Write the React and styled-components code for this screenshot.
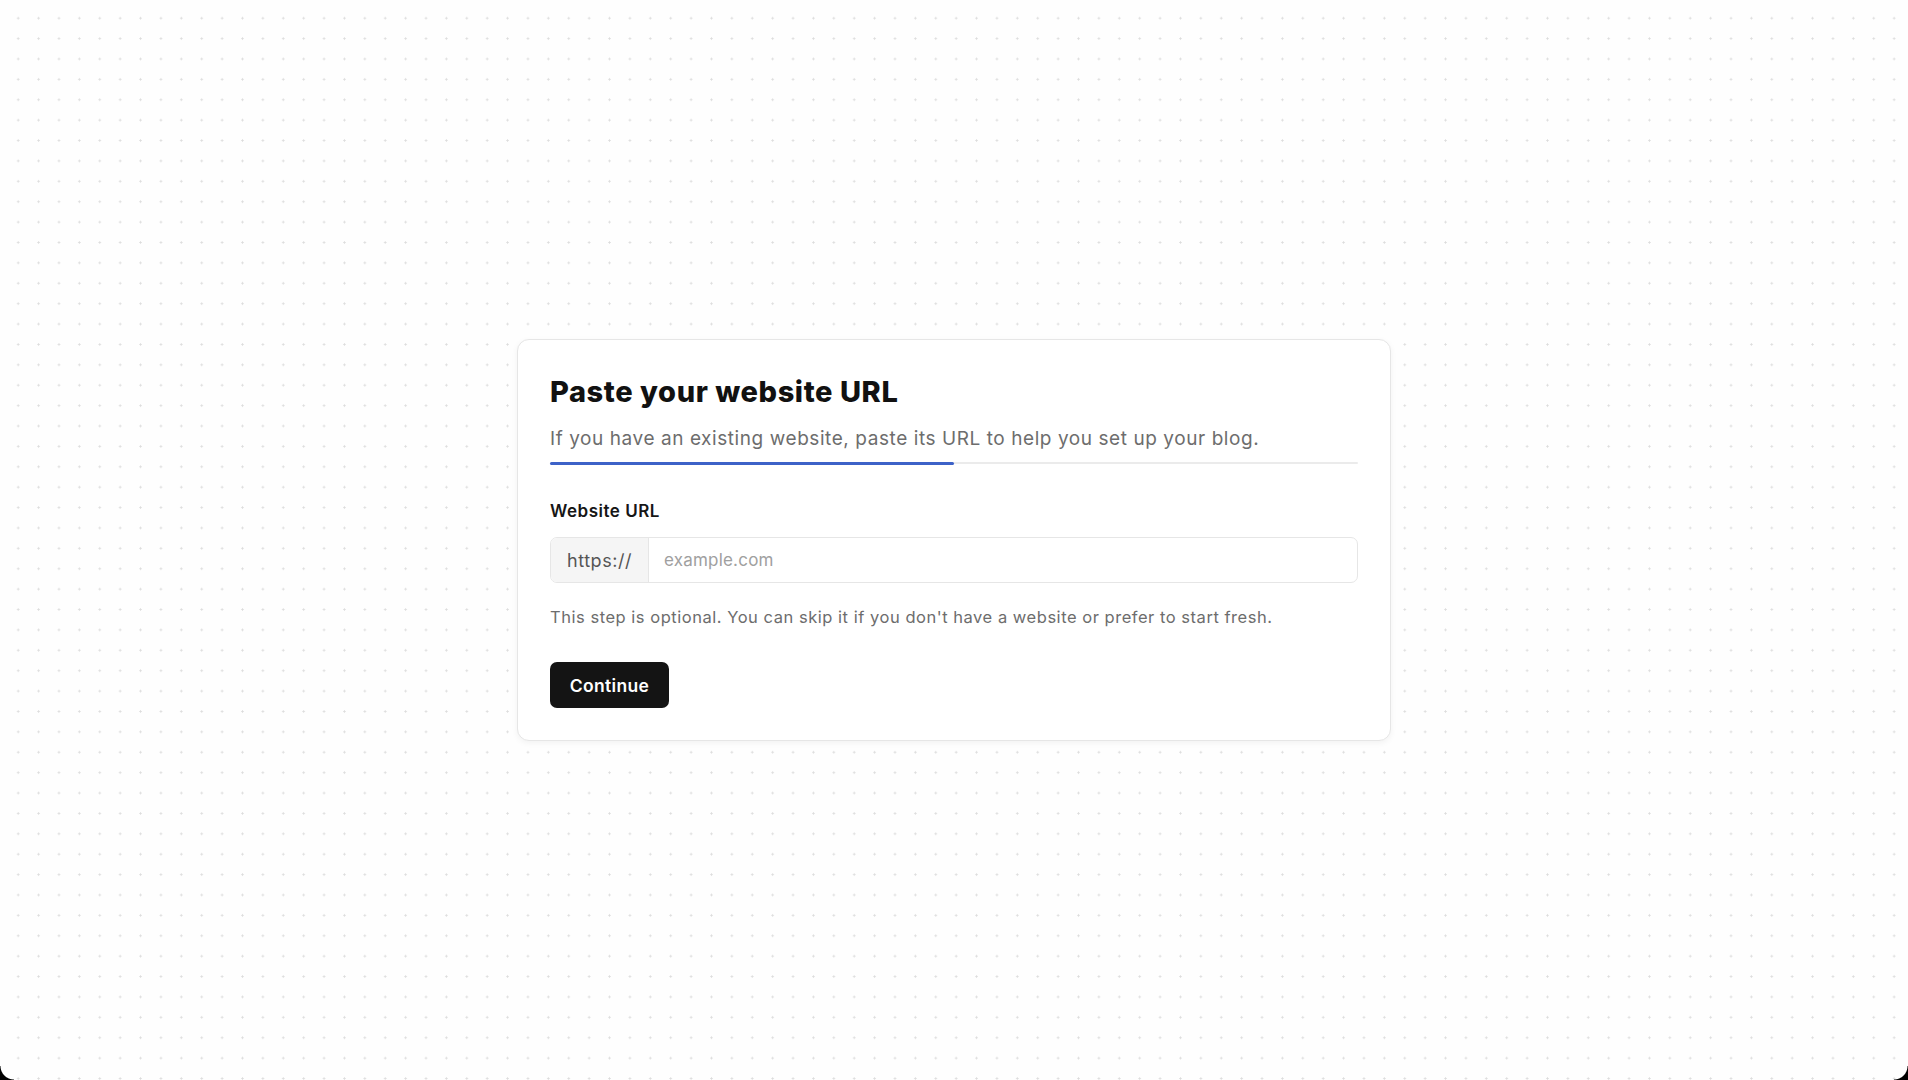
import React, { useState } from 'react';
import styled, { createGlobalStyle } from 'styled-components';

const GlobalStyle = createGlobalStyle`
  html, body {
    margin: 0;
    padding: 0;
    height: 100%;
  }

  body {
    font-family: Inter, "Noto Sans", "Liberation Sans", sans-serif;
    background-color: #fefefe;
    background-image: radial-gradient(circle, #dcdcdc 0.9px, transparent 1.2px);
    background-size: 20.4px 20.4px;
    background-position: 8px 8px;
    color: #111;
    -webkit-font-smoothing: antialiased;
  }

  #root {
    height: 100%;
  }
`;

const Page = styled.main`
  position: relative;
  height: 100vh;
  display: flex;
  align-items: center;
  justify-content: center;
  overflow: hidden;
`;

const Corner = styled.div`
  position: absolute;
  bottom: 0;
  ${(p) => (p.side === 'left' ? 'left: 0;' : 'right: 0;')}
  width: 14px;
  height: 14px;
  background: ${(p) => (p.side === 'left'
    ? 'radial-gradient(circle at 100% 0, transparent 13px, #000 14px)'
    : 'radial-gradient(circle at 0 0, transparent 13px, #000 14px)')};
`;

const Card = styled.section`
  box-sizing: border-box;
  width: 874px;
  padding: 35px 32px 32px;
  background: #fff;
  border: 1px solid #e6e6e6;
  border-radius: 12px;
  box-shadow: 0 2px 6px rgba(0, 0, 0, 0.05);
  display: flex;
  flex-direction: column;
`;

const Title = styled.h1`
  margin: 0;
  font-size: 29px;
  line-height: 34px;
  font-weight: 800;
  letter-spacing: 0.02em;
  color: #111;
`;

const Subtitle = styled.p`
  margin: 17px 0 0;
  font-size: 19px;
  line-height: 26px;
  color: #6d6d6d;
  letter-spacing: 0.03em;
`;

const Track = styled.div`
  margin-top: 10px;
  height: 2px;
  background: #ebebeb;
  border-radius: 2px;
`;

const Fill = styled.div`
  height: 3px;
  margin-top: -0.5px;
  background: #3d62c8;
  border-radius: 2px;
`;

const Label = styled.label`
  margin-top: 36px;
  font-size: 17px;
  line-height: 22px;
  font-weight: 600;
  letter-spacing: 0.03em;
  color: #161616;
`;

const InputGroup = styled.div`
  margin-top: 15px;
  display: flex;
  height: 46px;
  box-sizing: border-box;
  border: 1px solid #e6e6e6;
  border-radius: 7px;
  overflow: hidden;
  background: #fff;
`;

const Prefix = styled.span`
  width: 98px;
  box-sizing: border-box;
  display: flex;
  align-items: center;
  justify-content: center;
  background: #f5f5f5;
  border-right: 1px solid #e6e6e6;
  font-size: 18px;
  letter-spacing: 0.03em;
  color: #555;
`;

const Input = styled.input`
  flex: 1;
  border: 0;
  outline: none;
  padding: 0 15px;
  font-family: inherit;
  font-size: 17px;
  letter-spacing: 0.012em;
  color: #222;
  background: transparent;

  &::placeholder {
    color: #a0a0a0;
  }
`;

const Help = styled.p`
  margin: 23px 0 0;
  font-size: 16.5px;
  line-height: 22px;
  letter-spacing: 0.032em;
  color: #6d6d6d;
`;

const Button = styled.button`
  margin-top: 34px;
  align-self: flex-start;
  width: 119px;
  height: 46px;
  border: 0;
  border-radius: 7px;
  background: #141414;
  color: #fff;
  font-family: inherit;
  font-size: 17.5px;
  font-weight: 600;
  letter-spacing: 0.02em;
  cursor: pointer;
`;

export default function App() {
  const [url, setUrl] = useState('');
  const progress = 50;

  return (
    <>
      <GlobalStyle />
      <Page>
        <Card>
          <Title>Paste your website URL</Title>
          <Subtitle>If you have an existing website, paste its URL to help you set up your blog.</Subtitle>
          <Track>
            <Fill style={{ width: `${progress}%` }} />
          </Track>
          <Label htmlFor="website-url">Website URL</Label>
          <InputGroup>
            <Prefix>https://</Prefix>
            <Input
              id="website-url"
              type="text"
              placeholder="example.com"
              value={url}
              onChange={(e) => setUrl(e.target.value)} />
          </InputGroup>
          <Help>This step is optional. You can skip it if you don't have a website or prefer to start fresh.</Help>
          <Button type="button">Continue</Button>
        </Card>
        <Corner side="left" />
        <Corner side="right" />
      </Page>
    </>
  );
}
